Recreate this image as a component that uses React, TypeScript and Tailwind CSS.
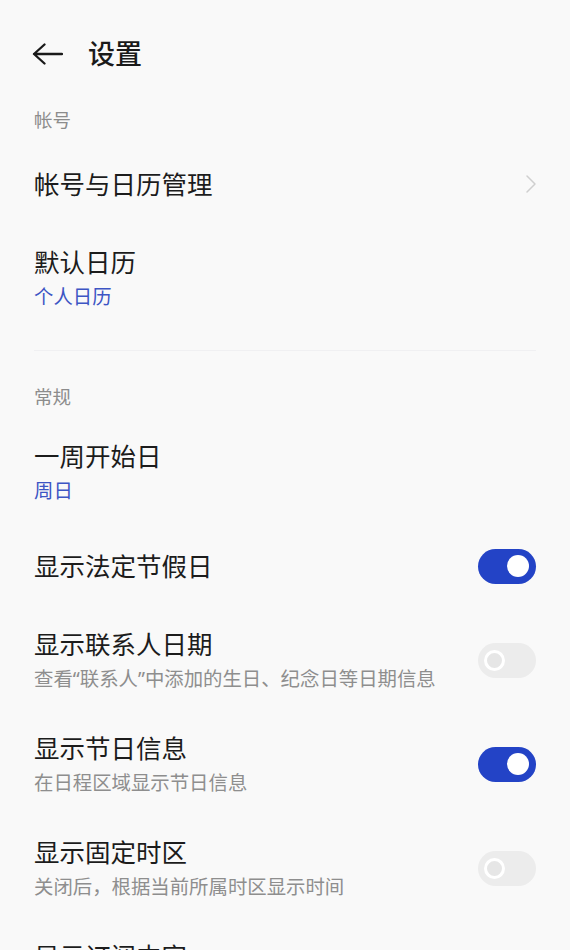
import React from 'react'

const FONT = '"Noto Sans", "Noto Sans CJK SC", sans-serif'

type Item = {
  title: string
  sub?: string
  subBlue?: boolean
  toggle?: 'on' | 'off'
  chevron?: boolean
}

function Toggle({ on }: { on: boolean }) {
  if (on) {
    return (
      <div className="w-[58px] h-[35px] rounded-full bg-[#2343c6] flex items-center justify-end pr-[7px] flex-shrink-0">
        <div className="w-[22px] h-[22px] rounded-full bg-white" />
      </div>
    )
  }
  return (
    <div className="w-[58px] h-[35px] rounded-full bg-[#ececec] flex items-center pl-[6px] flex-shrink-0">
      <div className="w-[21px] h-[21px] rounded-full border-[3px] border-white bg-[#e6e6e6]" />
    </div>
  )
}

function Row({ item }: { item: Item }) {
  const double = !!item.sub
  return (
    <div className={`flex items-center justify-between pl-[34px] pr-[34px] ${double ? 'h-[104px]' : 'h-[84px]'}`}>
      <div className="flex flex-col">
        <div className="text-[25.5px] leading-[32px] text-[#1c1c1c]">{item.title}</div>
        {item.sub && (
          <div
            className={`mt-[6px] text-[19.4px] leading-[26px] ${
              item.subBlue ? 'text-[#3d55c4]' : 'text-[#8e8e8e]'
            }`}
          >
            {item.sub}
          </div>
        )}
      </div>
      {item.toggle && <Toggle on={item.toggle === 'on'} />}
      {item.chevron && (
        <svg width="12" height="20" viewBox="0 0 12 20" className="mr-[-1px]">
          <path d="M2 2 L10 10 L2 18" fill="none" stroke="#cfcfcf" strokeWidth="1.5" strokeLinecap="round" strokeLinejoin="round" />
        </svg>
      )}
    </div>
  )
}

function SectionLabel({ text, h }: { text: string; h: string }) {
  return (
    <div className={`${h} pl-[34px] text-[18.5px] leading-[24px] text-[#8c8c8c]`}>{text}</div>
  )
}

export default function App() {
  return (
    <div className="w-[570px] h-[950px] overflow-hidden bg-[#f9f9f9]" style={{ fontFamily: FONT }}>
      {/* Header */}
      <div className="h-[108px] flex items-center pl-[32px]">
        <svg width="31" height="22" viewBox="0 0 31 22">
          <path d="M2 11 H30 M12.5 1.5 L2 11 L12.5 20.5" fill="none" stroke="#1a1a1a" strokeWidth="2.3" strokeLinecap="round" strokeLinejoin="round" />
        </svg>
        <div className="ml-[25px] text-[27px] font-medium text-[#1a1a1a] leading-[34px]">设置</div>
      </div>

      <SectionLabel text="帐号" h="h-[34px]" />
      <Row item={{ title: '帐号与日历管理', chevron: true }} />
      <Row item={{ title: '默认日历', sub: '个人日历', subBlue: true }} />

      <div className="mt-[20px] mx-[34px] h-px bg-[#f0f0f2]" />
      <div className="h-[34px]" />

      <SectionLabel text="常规" h="h-[35px]" />
      <Row item={{ title: '一周开始日', sub: '周日', subBlue: true }} />
      <Row item={{ title: '显示法定节假日', toggle: 'on' }} />
      <Row item={{ title: '显示联系人日期', sub: '查看“联系人”中添加的生日、纪念日等日期信息', toggle: 'off' }} />
      <Row item={{ title: '显示节日信息', sub: '在日程区域显示节日信息', toggle: 'on' }} />
      <Row item={{ title: '显示固定时区', sub: '关闭后，根据当前所属时区显示时间', toggle: 'off' }} />
      <Row item={{ title: '显示订阅内容', sub: '显示已订阅的日历内容', toggle: 'on' }} />
    </div>
  )
}
